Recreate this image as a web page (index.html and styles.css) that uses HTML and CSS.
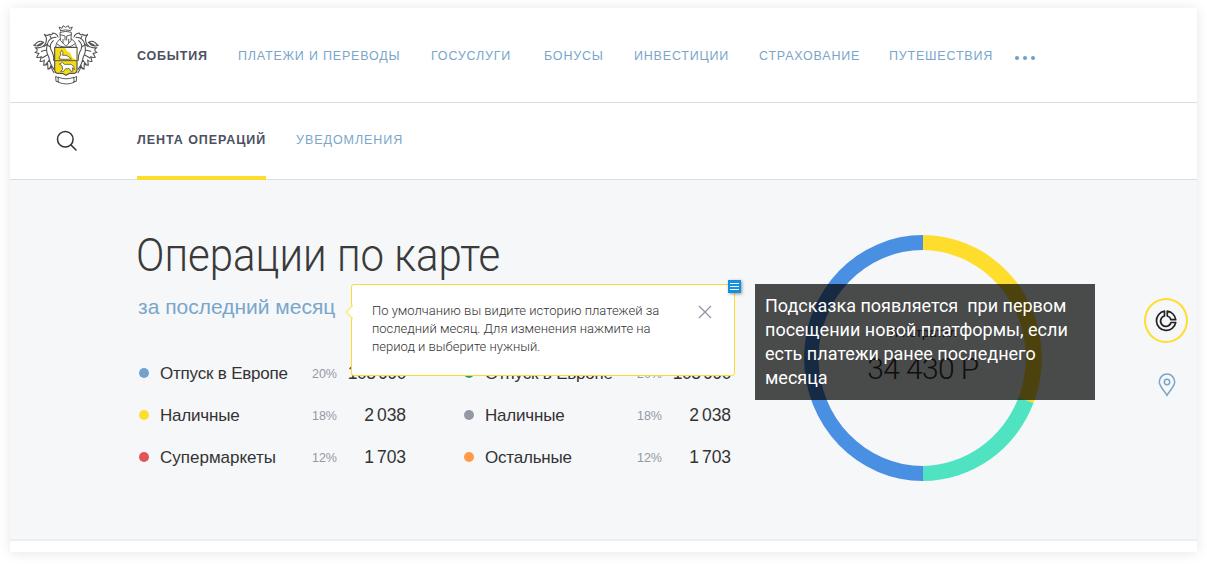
FILE: index.html
```html
<!DOCTYPE html>
<html lang="ru">
<head>
<meta charset="utf-8">
<title>Операции по карте</title>
<link rel="stylesheet" href="styles.css">
</head>
<body>
<div class="card">
  <header class="header">
    <svg class="logo" viewBox="0 0 228 216" fill="none" stroke="#505050" stroke-width="3.4" stroke-linejoin="round" stroke-linecap="round">
      <path d="M98 38l-5-11 9 4 3-8 8 5 8-5 3 8 9-4-5 11q-15-5-30 0z" stroke-width="2.8"/>
      <path d="M97 43q16-6 33 0l-1 25-15 17-16-17zM97 50l14 4v12M130 50l-14 4v12M105 64v10M122 64v10" stroke-width="2.8"/>
      <path d="M97 63q-13 7-14 25M130 63q14 7 15 25M87 78l11 7 15 3 16-3 11-7" stroke-width="2.8"/>
      <path d="M80 88h67v67q0 11-12 11h-10l-11 6-11-6H92q-12 0-12-11z" fill="#f5dc12"/>
      <path d="M112 90l5 10 9 4 7 15 12 7V90z" fill="#fff" stroke="none"/>
      <path d="M80 128h67" stroke-width="2.8"/>
      <path d="M94 122v-6l5-4-2-8 4-7 4 7-1 8h10l8 4 8 7-16 1z" fill="#fff" stroke-width="2.4"/>
      <path d="M95 138l8-5 6 6h20l8 6 2 10-6-6 2 10-6 1-5-8h-11l-6 8-9 0 6-6-2-10z" fill="#fff" stroke-width="2.4"/>
      <g stroke-width="3.2">
        <path d="M90 57Q88 47 74 45q-2 8-10 4-6 6-15 0 8 9 6 19-1 12-12 18-8 5-22 3 10 6 5 11l-5 3q8 4 12 3l-7 12q8 2 14-2l-4 14q8 2 13-4l-2 16q8 0 12-6l1 18q6-2 10-8 2 12 8 18"/>
        <path d="M84 58Q62 58 58 80q-6 20 4 36 4 24 16 38M76 68q-14 12-7 27 9 14 8 32M58 78l-10 8M56 96l-16 4M59 110l-17 10M64 126l-10 12M70 140l-5 12M66 54l4 8M68 88l-8-6"/>
        <path d="M47 73q-15-9-26 7l-4 2q10 4 20 0zM43 74l-14 8"/>
      </g>
      <g transform="translate(228 0) scale(-1 1)" stroke-width="3.2">
        <path d="M90 57Q88 47 74 45q-2 8-10 4-6 6-15 0 8 9 6 19-1 12-12 18-8 5-22 3 10 6 5 11l-5 3q8 4 12 3l-7 12q8 2 14-2l-4 14q8 2 13-4l-2 16q8 0 12-6l1 18q6-2 10-8 2 12 8 18"/>
        <path d="M84 58Q62 58 58 80q-6 20 4 36 4 24 16 38M76 68q-14 12-7 27 9 14 8 32M58 78l-10 8M56 96l-16 4M59 110l-17 10M64 126l-10 12M70 140l-5 12M66 54l4 8M68 88l-8-6"/>
        <path d="M47 73q-15-9-26 7l-4 2q10 4 20 0zM43 74l-14 8"/>
      </g>
      <path d="M92 178q22 9 45 0l2 15q-24 10-48 0zM92 180l-9-5 1 15 8 1M137 180l9-5-1 15-8 1" stroke-width="2.8"/>
    </svg>
    <nav class="nav">
      <a class="active">СОБЫТИЯ</a><a>ПЛАТЕЖИ И ПЕРЕВОДЫ</a><a>ГОСУСЛУГИ</a><a>БОНУСЫ</a><a>ИНВЕСТИЦИИ</a><a>СТРАХОВАНИЕ</a><a>ПУТЕШЕСТВИЯ</a>
      <span class="more"><i></i><i></i><i></i></span>
    </nav>
  </header>
  <div class="subheader">
    <svg class="search" viewBox="0 0 22 22" fill="none" stroke="#333" stroke-width="1.5" stroke-linecap="round"><circle cx="9.3" cy="9.3" r="7.8"/><path d="M15 15l5 5"/></svg>
    <nav class="tabs"><a class="active">ЛЕНТА ОПЕРАЦИЙ</a><a>УВЕДОМЛЕНИЯ</a></nav>
  </div>
  <main class="main">
    <section class="summary">
      <h1><span>Операции по карте</span></h1>
      <div class="period"><span>за последний месяц</span></div>
      <div class="lists">
        <ul>
          <li><i class="blue"></i><b class="tight">Отпуск в Европе</b><em>20%</em><strong class="long">108 990</strong></li>
          <li><i class="yellow"></i><b class="tight">Наличные</b><em>18%</em><strong>2 038</strong></li>
          <li><i class="red"></i><b>Супермаркеты</b><em>12%</em><strong>1 703</strong></li>
        </ul>
        <ul>
          <li><i class="green"></i><b class="tight">Отпуск в Европе</b><em>20%</em><strong class="long">108 990</strong></li>
          <li><i class="gray"></i><b class="tight">Наличные</b><em>18%</em><strong>2 038</strong></li>
          <li><i class="orange"></i><b class="tight">Остальные</b><em>12%</em><strong>1 703</strong></li>
        </ul>
      </div>
    </section>
    <section class="chart">
      <svg viewBox="0 0 238 246" fill="none">
        <path d="M119 0A119 123 0 0 1 229.500 168L214.500 162.500A104.500 108 0 0 0 119 15z" fill="#ffdd2d"/>
        <path d="M229.500 168A119 123 0 0 1 119 246V231A104.500 108 0 0 0 214.500 162.500z" fill="#50e3c2"/>
        <path d="M119 246A119 123 0 0 1 119 0V15A104.500 108 0 0 0 119 231z" fill="#4a90e2"/>
      </svg>
      <div class="total"><span class="caption">Я потратил</span><span class="sum">34 430 Р</span></div>
    </section>
    <aside class="tools">
      <span class="ring"><svg viewBox="0 0 22 22" fill="none" stroke="#222" stroke-width="1.7" stroke-linejoin="round"><path d="M9.500 1.200A9.700 9.700 0 1 0 20.700 12.500H16A5.300 5.300 0 1 1 9.500 6z"/><path d="M12.300 1.200V6A5.300 5.300 0 0 1 16 9.700H20.700A9.700 9.700 0 0 0 12.300 1.200z"/></svg></span>
      <svg class="pin" viewBox="0 0 18 24" fill="none" stroke="#79a6ca" stroke-width="1.500"><path d="M9 22.300C6.500 18 1.300 13.500 1.300 8.800a7.700 7.700 0 0 1 15.400 0C16.700 13.500 11.500 18 9 22.300z"/><circle cx="9" cy="9" r="2.700"/></svg>
    </aside>
  </main>
  <footer class="footer"></footer>
</div>
<div class="tooltip">
  <svg class="arrow" viewBox="0 0 8 16"><path d="M8 1L1.500 8 8 15" fill="#fff" stroke="#ffe982" stroke-width="1.500"/></svg>
  <p>По умолчанию вы видите историю платежей за<br>последний месяц. Для изменения нажмите на<br>период и выберите нужный.</p>
  <svg class="close" viewBox="0 0 14 14" stroke="#8d929e" stroke-width="1.200"><path d="M1 1l12 12M13 1L1 13"/></svg>
  <span class="badge"><i></i><i></i><i></i></span>
</div>
<div class="note">Подсказка появляется&nbsp; при первом<br>посещении новой платформы, если<br>есть платежи ранее последнего<br>месяца</div>
</body>
</html>
```
FILE: styles.css
```css
* { box-sizing: border-box; }
body { margin: 0; height: 564px; overflow: hidden; padding: 8px 10px 12px; background: #fff; font-family: "Liberation Sans", Arial, sans-serif; position: relative; }
.card { height: 544px; background: #fff; box-shadow: 0 1px 12px rgba(0,0,0,.1); display: flex; flex-direction: column; }
.header { height: 95px; border-bottom: 1px solid #dcdddf; display: flex; padding: 10px 0 0 18px; }
.logo { width: 76px; height: 72px; flex: none; }
.nav { display: grid; grid-template-columns: 101px 193px 113px 90px 125px 130px 126px auto; margin-left: 33px; padding-top: 31px; line-height: 15px; }
.nav a, .tabs a { font-size: 12.500px; letter-spacing: .8px; color: #79a6ca; white-space: nowrap; }
.nav .active, .tabs .active { font-weight: bold; color: #4b5060; }
.tabs a { letter-spacing: .95px; }
.more { display: flex; gap: 4px; padding: 7px 0 0 0; }
.more i { width: 4px; height: 4px; border-radius: 50%; background: #6c9fc6; }
.subheader { height: 77px; border-bottom: 1px solid #dcdddf; display: flex; flex: none; padding-left: 46px; }
.search { width: 22px; height: 22px; margin-top: 27px; }
.tabs { display: flex; gap: 30px; margin-left: 59px; line-height: 15px; }
.tabs a { padding-top: 30px; height: 77px; }
.tabs .active { width: 129px; border-bottom: 4px solid #ffdd2d; }
.main { height: 361px; flex: none; background: #f6f7f9; border-bottom: 2px solid #eceef0; display: flex; position: relative; }
.summary { width: 721px; padding: 44px 0 0 126px; flex: none; }
h1 { margin: 0; height: 62px; font: 300 47px/62px Roboto, sans-serif; color: #3a3a3a; white-space: nowrap; }
h1 span { display: inline-block; transform: scaleX(.893); transform-origin: 0 50%; }
.period { height: 42px; line-height: 42px; font-size: 21px; color: #79a6ca; white-space: nowrap; }
.period span { margin-left: 2px; }
.lists { display: flex; gap: 57px; padding: 25px 0 0 2px; }
ul { list-style: none; margin: 0; padding: 0; width: 268px; }
li { display: grid; grid-template-columns: 22px 1fr 40px 69px; height: 42px; line-height: 42px; color: #333; white-space: nowrap; }
li i { width: 10px; height: 10px; border-radius: 50%; margin: 15px 0 0 .5px; }
li b { font-weight: 400; font-size: 17px; }
li .tight { letter-spacing: -.2px; }
li em { font-style: normal; font-size: 12.500px; color: #9299a5; text-align: right; }
li strong { font-weight: 400; font-size: 17.500px; line-height: 40px; letter-spacing: -.1px; word-spacing: -1.500px; text-align: right; }
li .long { letter-spacing: -.5px; }
.blue { background: #71a2ca; } .yellow { background: #ffdd2d; } .red { background: #e05555; }
.green { background: #26a65b; } .gray { background: #9299a5; } .orange { background: #ff9a48; }
.chart { width: 238px; margin: 55px 0 0 73px; display: grid; height: 246px; }
.chart svg, .total { grid-area: 1 / 1; width: 238px; height: 246px; }
.total { display: flex; flex-direction: column; align-items: center; padding-top: 89px; color: #333; }
.caption { font-size: 13px; line-height: 18px; }
.sum { font: 300 30px/36px Roboto, sans-serif; letter-spacing: -.6px; padding-top: 9px; white-space: nowrap; }
.tools { margin-left: 102px; padding-top: 118px; display: flex; flex-direction: column; align-items: center; }
.ring { width: 44px; height: 45px; border: 2px solid #ffdd2d; border-radius: 50%; display: grid; place-items: center; }
.ring svg { width: 22px; height: 22px; }
.pin { width: 18px; height: 24px; margin: 30px 0 0 1.500px; }
.footer { height: 11px; background: #fff; }
.tooltip { position: absolute; left: 351px; top: 284px; width: 384px; height: 92px; background: #fff; border: 1px solid #fbdb32; border-radius: 3px; }
.tooltip p { margin: 17px 0 0 20px; font: 300 13px/18px Roboto, sans-serif; color: #333; white-space: nowrap; }
.arrow { position: absolute; left: -7px; top: 19px; width: 8px; height: 16px; }
.close { position: absolute; right: 22px; top: 20px; width: 14px; height: 14px; }
.badge { position: absolute; right: -7px; top: -5px; width: 13px; height: 13px; background: #1590e0; box-shadow: 1px 1px 3px rgba(0,0,0,.4); display: flex; flex-direction: column; justify-content: center; align-items: center; gap: 2px; }
.badge i { width: 9px; height: 1px; background: #fff; }
.note { position: absolute; left: 755px; top: 284px; width: 340px; height: 116px; padding: 10px; background: rgba(0,0,0,.7); color: #fff; font: 400 18px/24px Roboto, sans-serif; white-space: nowrap; }
```
